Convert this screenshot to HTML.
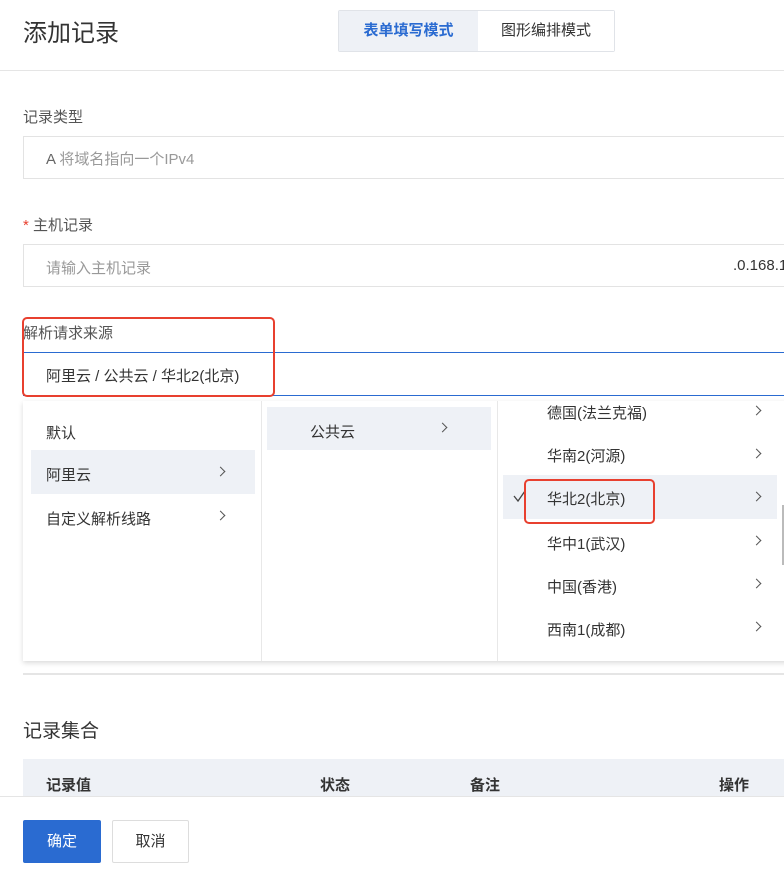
<!DOCTYPE html>
<html><head><meta charset="utf-8"><style>
*{box-sizing:border-box;margin:0;padding:0}
body{width:784px;height:869px;overflow:hidden;background:#fff;font-family:"Liberation Sans","Noto Sans CJK SC",sans-serif;color:#333;position:relative}
.a{position:absolute;white-space:nowrap}
.chev{position:absolute;width:7px;height:7px;border-right:1.3px solid #555;border-top:1.3px solid #555;transform:rotate(45deg)}
.inp{position:absolute;left:23px;width:770px;height:43px;border:1px solid #e3e3e3;background:#fff}
</style></head><body>
<div class="a" style="left:23px;top:13px;font-size:24px;color:#333">添加记录</div>
<div class="a" style="left:338px;top:10px;width:277px;height:42px;border:1px solid #e0e3e8;border-radius:2px;display:flex">
 <div style="width:139px;background:#eef1f6;color:#2a6bd1;font-weight:bold;font-size:15px;text-align:center;line-height:40px">表单填写模式</div>
 <div style="flex:1;background:#fff;color:#333;font-size:15px;text-align:center;line-height:40px">图形编排模式</div>
</div>
<div class="a" style="left:0;top:70px;width:784px;height:1px;background:#e5e5e5"></div>

<div class="a" style="left:23px;top:106px;font-size:15px;color:#555">记录类型</div>
<div class="inp" style="top:136px"></div>
<div class="a" style="left:46px;top:148px;font-size:15px;color:#999"><span style="color:#666">A</span> 将域名指向一个IPv4</div>

<div class="a" style="left:23px;top:214px;font-size:15px;color:#555"><span style="color:#e8402f">*</span> 主机记录</div>
<div class="inp" style="top:244px"></div>
<div class="a" style="left:46px;top:257px;font-size:15px;color:#999">请输入主机记录</div>
<div class="a" style="left:733px;top:257px;font-size:15px;color:#333">.0.168.1</div>

<div class="a" style="left:23px;top:322px;font-size:15px;color:#555">解析请求来源</div>
<div class="a" style="left:23px;top:352px;width:770px;height:44px;border-top:1px solid #2a6bd1;border-bottom:1px solid #2a6bd1;background:#fff"></div>
<div class="a" style="left:46px;top:365px;font-size:15px;color:#333">阿里云 / 公共云 / 华北2(北京)</div>
<div class="a" style="left:22px;top:317px;width:253px;height:80px;border:2px solid #e8402f;border-radius:5px"></div>

<div class="a" style="left:23px;top:401px;width:770px;height:260px;background:#fff;box-shadow:0 2px 5px rgba(0,0,0,.15)"></div>
<div class="a" style="left:261px;top:401px;width:1px;height:260px;background:#e8e8e8"></div>
<div class="a" style="left:497px;top:401px;width:1px;height:260px;background:#e8e8e8"></div>

<div class="a" style="left:46px;top:422px;font-size:15px">默认</div>
<div class="a" style="left:31px;top:450px;width:224px;height:44px;background:#eef1f6"></div>
<div class="a" style="left:46px;top:464px;font-size:15px">阿里云</div>
<div class="chev" style="left:217px;top:468px"></div>
<div class="a" style="left:46px;top:508px;font-size:15px">自定义解析线路</div>
<div class="chev" style="left:217px;top:512px"></div>

<div class="a" style="left:267px;top:407px;width:224px;height:43px;background:#eef1f6"></div>
<div class="a" style="left:310px;top:421px;font-size:15px">公共云</div>
<div class="chev" style="left:439px;top:424px"></div>

<div class="a" style="left:503px;top:475px;width:274px;height:44px;background:#eef1f6"></div>
<div class="a" style="left:547px;top:402px;font-size:15px">德国(法兰克福)</div><div class="chev" style="left:753px;top:407px"></div>
<div class="a" style="left:547px;top:445px;font-size:15px">华南2(河源)</div><div class="chev" style="left:753px;top:450px"></div>
<div class="a" style="left:547px;top:488px;font-size:15px">华北2(北京)</div><div class="chev" style="left:753px;top:493px"></div>
<div class="a" style="left:547px;top:533px;font-size:15px">华中1(武汉)</div><div class="chev" style="left:753px;top:537px"></div>
<div class="a" style="left:547px;top:576px;font-size:15px">中国(香港)</div><div class="chev" style="left:753px;top:580px"></div>
<div class="a" style="left:547px;top:619px;font-size:15px">西南1(成都)</div><div class="chev" style="left:753px;top:623px"></div>
<svg class="a" style="left:513px;top:490px" width="14" height="14"><path d="M1 6 L5 11 L12 1" fill="none" stroke="#444" stroke-width="1.3"/></svg>
<div class="a" style="left:524px;top:479px;width:131px;height:45px;border:2px solid #e8402f;border-radius:5px"></div>
<div class="a" style="left:782px;top:505px;width:2px;height:60px;background:#bbb"></div>

<div class="a" style="left:23px;top:673px;width:770px;height:2px;background:#e5e5e5"></div>
<div class="a" style="left:23px;top:716px;font-size:19px;color:#333">记录集合</div>
<div class="a" style="left:23px;top:759px;width:770px;height:40px;background:#eef1f6"></div>
<div class="a" style="left:46px;top:774px;font-size:15px;font-weight:bold">记录值</div>
<div class="a" style="left:320px;top:774px;font-size:15px;font-weight:bold">状态</div>
<div class="a" style="left:470px;top:774px;font-size:15px;font-weight:bold">备注</div>
<div class="a" style="left:719px;top:774px;font-size:15px;font-weight:bold">操作</div>

<div class="a" style="left:0;top:796px;width:784px;height:73px;background:#fff;border-top:1px solid #e5e5e5"></div>
<div class="a" style="left:23px;top:820px;width:78px;height:43px;background:#2a6bd1;border-radius:2px;color:#fff;font-size:15px;text-align:center;line-height:43px">确定</div>
<div class="a" style="left:112px;top:820px;width:77px;height:43px;background:#fff;border:1px solid #ddd;border-radius:2px;color:#333;font-size:15px;text-align:center;line-height:41px">取消</div>
</body></html>
